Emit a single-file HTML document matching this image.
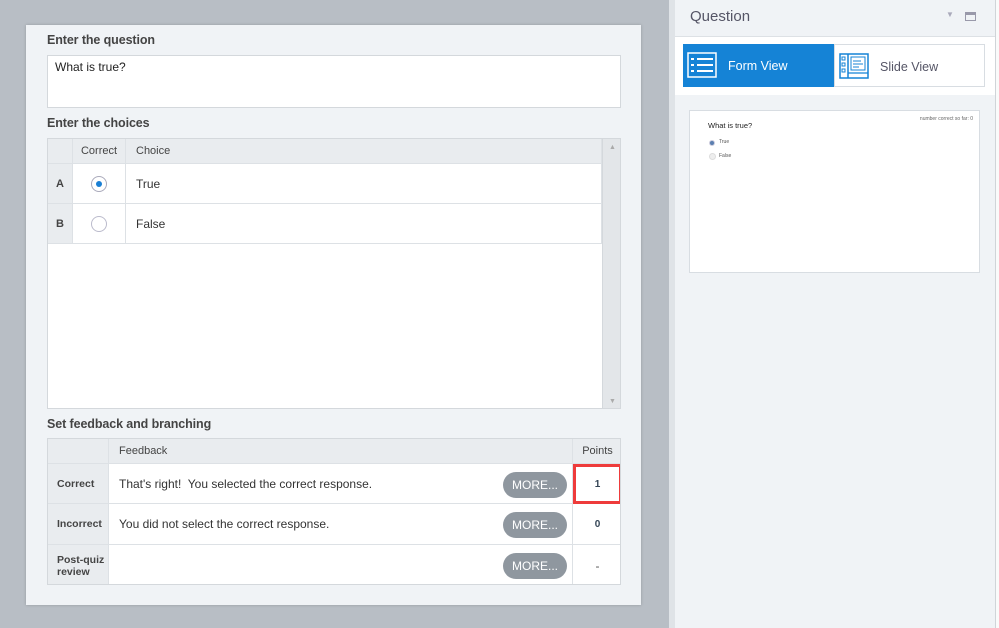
<!DOCTYPE html>
<html><head><meta charset="utf-8"><style>
*{box-sizing:border-box;margin:0;padding:0}
body{width:999px;height:628px;background:#b8bec5;font-family:"Liberation Sans",sans-serif;color:#333;position:relative;overflow:hidden;font-size:12px}
.abs{position:absolute}
.card{left:26px;top:25px;width:615px;height:580px;background:#f0f3f6;box-shadow:0 0 3px rgba(0,0,0,.2)}
.lbl{font-size:12.5px;color:#444;font-weight:bold;letter-spacing:-.1px}
.box{background:#fff;border:1px solid #d4d8dc}
.hd{background:#e9ecef;color:#444;font-size:11px}
.cell{position:absolute;border-right:1px solid #dde1e5;border-bottom:1px solid #dde1e5;display:flex;align-items:center}
.more{position:absolute;width:64px;height:26px;border-radius:13px;background:#8f979f;color:#fff;font-size:12px;display:flex;align-items:center;justify-content:center}
</style></head><body>
<div class="abs card"></div>
<div class="abs lbl" style="left:47px;top:33px">Enter the question</div>
<div class="abs box" style="left:47px;top:55px;width:574px;height:53px;padding:4px 7px;font-size:12px;color:#222">What is true?</div>
<div class="abs lbl" style="left:47px;top:116px">Enter the choices</div>
<div class="abs box" style="left:47px;top:138px;width:574px;height:271px;overflow:hidden">
 <div class="cell hd" style="left:0;top:0;width:25px;height:25px"></div>
 <div class="cell hd" style="left:25px;top:0;width:53px;height:25px;justify-content:center">Correct</div>
 <div class="cell hd" style="left:78px;top:0;width:476px;height:25px;padding-left:10px">Choice</div>
 <div class="cell hd" style="left:0;top:25px;width:25px;height:40px;justify-content:center;font-weight:bold;font-size:11px">A</div>
 <div class="cell" style="left:25px;top:25px;width:53px;height:40px;justify-content:center"><span style="width:16px;height:16px;border:1px solid #aab;border-radius:50%;display:flex;align-items:center;justify-content:center"><span style="width:6px;height:6px;border-radius:50%;background:#1a7fd4"></span></span></div>
 <div class="cell" style="left:78px;top:25px;width:476px;height:40px;padding-left:10px;font-size:12px">True</div>
 <div class="cell hd" style="left:0;top:65px;width:25px;height:40px;justify-content:center;font-weight:bold;font-size:11px">B</div>
 <div class="cell" style="left:25px;top:65px;width:53px;height:40px;justify-content:center"><span style="width:16px;height:16px;border:1px solid #bbc;border-radius:50%"></span></div>
 <div class="cell" style="left:78px;top:65px;width:476px;height:40px;padding-left:10px;font-size:12px">False</div>
 <div class="abs" style="left:554px;top:0;width:19px;height:271px;background:#e3e6e9;border-left:1px solid #d4d8dc"><div style="position:absolute;top:5px;left:6px;font-size:7px;color:#aaa">▲</div><div style="position:absolute;bottom:5px;left:6px;font-size:7px;color:#aaa">▼</div></div>
</div>
<div class="abs lbl" style="left:47px;top:417px">Set feedback and branching</div>
<div class="abs box" style="left:47px;top:438px;width:574px;height:147px;overflow:hidden">
 <div class="cell hd" style="left:0;top:0;width:61px;height:25px"></div>
 <div class="cell hd" style="left:61px;top:0;width:464px;height:25px;padding-left:10px">Feedback</div>
 <div class="cell hd" style="left:525px;top:0;width:49px;height:25px;justify-content:center;border-right:0">Points</div>
 <div class="cell hd" style="left:0;top:25px;width:61px;height:40px;padding-left:9px;font-weight:bold;font-size:10.5px">Correct</div>
 <div class="cell" style="left:61px;top:25px;width:464px;height:40px;padding-left:10px">That's right!&nbsp; You selected the correct response.</div>
 <div class="cell" style="left:525px;top:25px;width:49px;height:40px;justify-content:center;font-weight:bold;font-size:10px;color:#345;border:3px solid #ee3b3b">1</div>
 <div class="cell hd" style="left:0;top:65px;width:61px;height:41px;padding-left:9px;font-weight:bold;font-size:10.5px">Incorrect</div>
 <div class="cell" style="left:61px;top:65px;width:464px;height:41px;padding-left:10px">You did not select the correct response.</div>
 <div class="cell" style="left:525px;top:65px;width:49px;height:41px;justify-content:center;font-weight:bold;font-size:10px;color:#345;border-right:0">0</div>
 <div class="cell hd" style="left:0;top:106px;width:61px;height:41px;padding-left:9px;font-weight:bold;font-size:10.5px;line-height:12px;border-bottom:0">Post-quiz<br>review</div>
 <div class="cell" style="left:61px;top:106px;width:464px;height:41px;border-bottom:0"></div>
 <div class="cell" style="left:525px;top:106px;width:49px;height:41px;justify-content:center;border:0;color:#555">-</div>
 <div class="more" style="left:455px;top:33px">MORE...</div>
 <div class="more" style="left:455px;top:73px">MORE...</div>
 <div class="more" style="left:455px;top:114px">MORE...</div>
</div>
<!-- right panel -->
<div class="abs" style="left:669px;top:0;width:6px;height:628px;background:#dfe3e7"></div>
<div class="abs" style="left:675px;top:0;width:320px;height:628px;background:#f0f3f6"></div>
<div class="abs" style="left:995px;top:0;width:4px;height:628px;background:#fafafa;border-left:1px solid #d0d4d8"></div>
<div class="abs" style="left:690px;top:8px;font-size:15px;color:#556">Question</div>
<div class="abs" style="left:946px;top:10px;font-size:8px;color:#aab">▼</div>
<div class="abs" style="left:965px;top:12px;width:11px;height:9px;border:1.5px solid #99a;border-top-width:3px"></div>
<div class="abs" style="left:675px;top:36px;width:320px;height:59px;background:#fff;border-top:1px solid #dde1e5"></div>
<div class="abs" style="left:683px;top:44px;width:151px;height:43px;background:#1583d6;color:#fff;font-size:12.5px">
 <svg class="abs" style="left:4px;top:8px" width="30" height="26" viewBox="0 0 30 26"><rect x="1" y="1" width="28" height="24" fill="none" stroke="#fff" stroke-width="1.5"/><g stroke="#fff" stroke-width="2"><line x1="4" y1="7" x2="7" y2="7"/><line x1="10" y1="7" x2="26" y2="7"/><line x1="4" y1="13" x2="7" y2="13"/><line x1="10" y1="13" x2="26" y2="13"/><line x1="4" y1="19" x2="7" y2="19"/><line x1="10" y1="19" x2="26" y2="19"/></g></svg>
 <span class="abs" style="left:45px;top:15px">Form View</span></div>
<div class="abs" style="left:834px;top:44px;width:151px;height:43px;background:#fff;border:1px solid #d8dde2;color:#556;font-size:12.5px">
 <svg class="abs" style="left:4px;top:8px" width="30" height="26" viewBox="0 0 30 26"><rect x="1" y="1" width="28" height="24" fill="none" stroke="#1583d6" stroke-width="1.5"/><line x1="9" y1="1" x2="9" y2="25" stroke="#1583d6" stroke-width="1.5"/><line x1="9" y1="20" x2="29" y2="20" stroke="#1583d6" stroke-width="1.2"/><g fill="none" stroke="#1583d6"><rect x="3" y="4" width="3" height="3"/><rect x="3" y="10" width="3" height="3"/><rect x="3" y="16" width="3" height="3"/><rect x="12" y="4" width="14" height="13"/></g><g stroke="#1583d6"><line x1="14" y1="8" x2="22" y2="8"/><line x1="14" y1="11" x2="24" y2="11"/><line x1="14" y1="14" x2="20" y2="14"/></g></svg>
 <span class="abs" style="left:45px;top:15px">Slide View</span></div>
<div class="abs" style="left:689px;top:110px;width:291px;height:163px;background:#fff;border:1px solid #d8dde2">
 <div class="abs" style="right:6px;top:5px;font-size:5px;color:#666">number correct so far: 0</div>
 <div class="abs" style="left:18px;top:10px;font-size:7.5px;color:#222">What is true?</div>
 <div class="abs" style="left:19px;top:29px;width:6px;height:6px;border-radius:50%;background:#5b7fb0;border:1px solid #ccd"></div>
 <div class="abs" style="left:29px;top:28px;font-size:5px;color:#555">True</div>
 <div class="abs" style="left:19px;top:42px;width:7px;height:7px;border-radius:50%;background:#eee;border:1px solid #ddd"></div>
 <div class="abs" style="left:29px;top:42px;font-size:5px;color:#555">False</div>
</div>
</body></html>
